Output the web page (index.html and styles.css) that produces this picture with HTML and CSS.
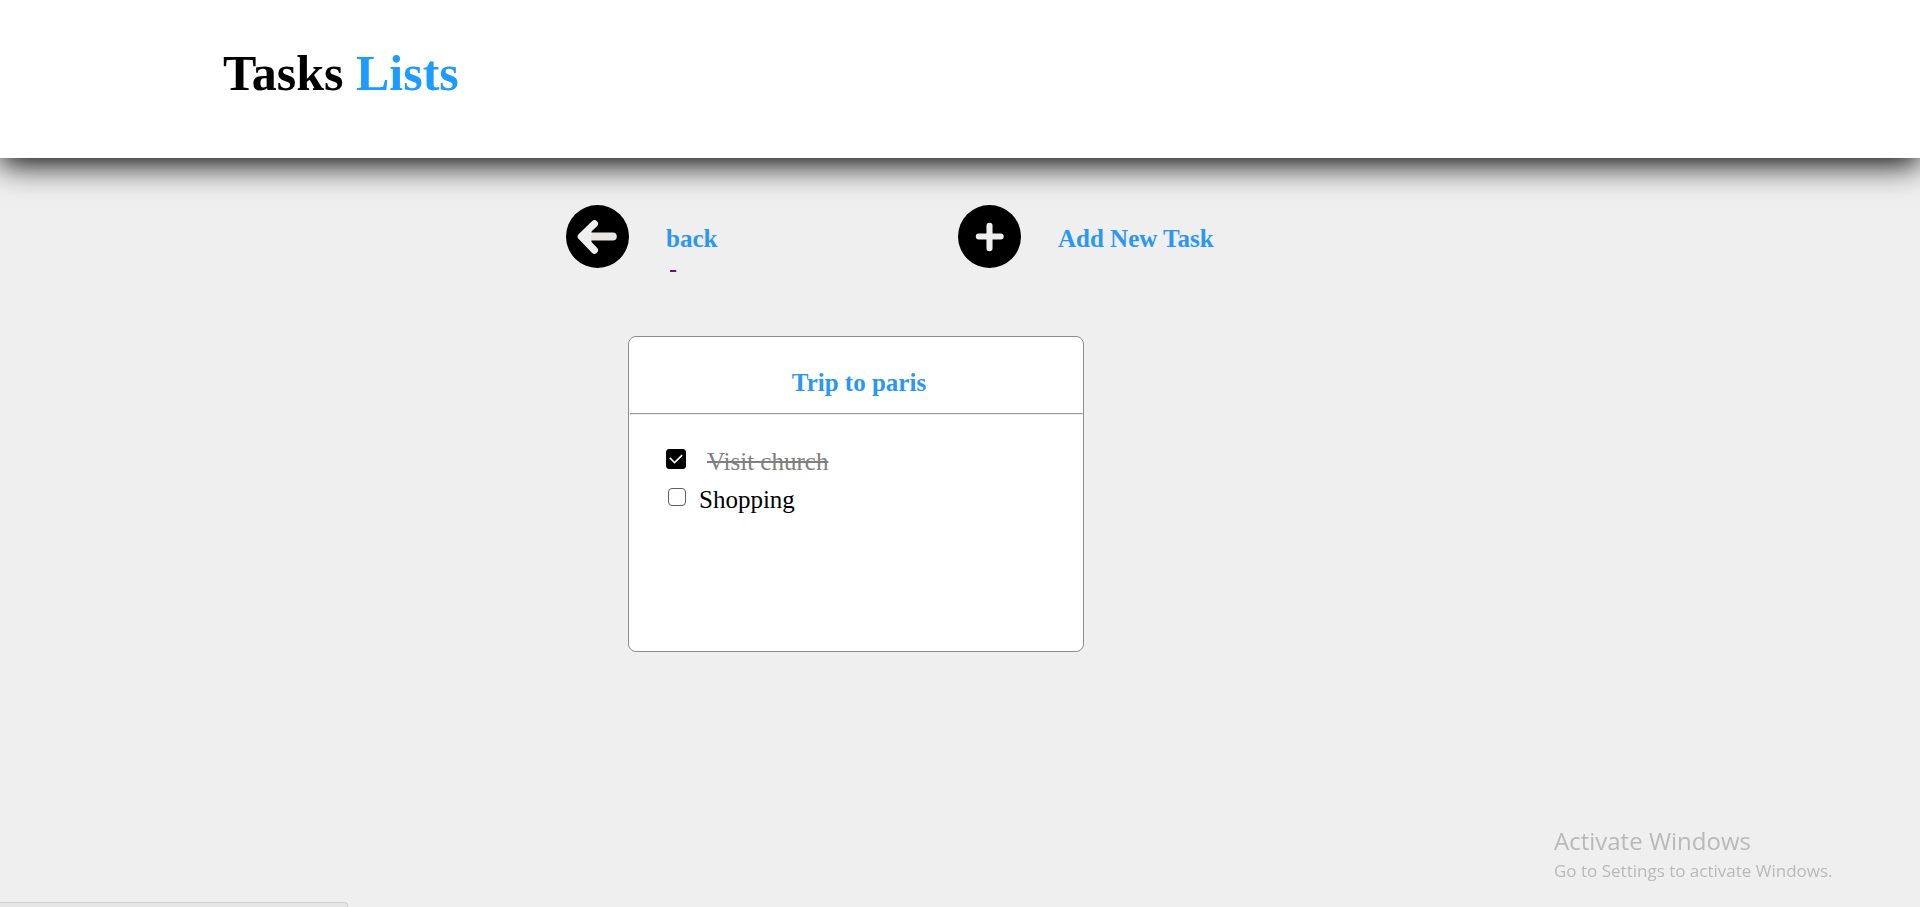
FILE: index.html
```html
<!DOCTYPE html>
<html lang="en">
<head>
<meta charset="utf-8">
<title>Tasks Lists</title>
<link rel="stylesheet" href="styles.css">
</head>
<body>
<header class="header">
  <h1 class="title">Tasks <span class="accent">Lists</span></h1>
</header>
<main class="main">
  <nav class="actions">
    <a class="action" href="#back">
      <svg class="action-icon" viewBox="0 0 62 62" aria-hidden="true">
        <circle cx="31" cy="31" r="31" fill="#000"/>
        <path d="M46 31H20" stroke="#e9e5e5" stroke-width="8" stroke-linecap="round"/>
        <path d="M28 18.500L15 31l13 13.500" fill="none" stroke="#efefef" stroke-width="7" stroke-linecap="round" stroke-linejoin="round"/>
        <path d="M15 31l10-9v18z" fill="#efefef"/>
      </svg>
      <span class="action-text">back<span class="action-tail">&nbsp;</span></span>
    </a>
    <a class="action" href="#new">
      <svg class="action-icon" viewBox="0 0 62 62" aria-hidden="true">
        <circle cx="31" cy="31" r="31" fill="#000"/>
        <path d="M20.500 31h21.500M31 20.500v22" stroke="#efefef" stroke-width="6" stroke-linecap="round"/>
      </svg>
      <span class="action-text">Add New Task</span>
    </a>
  </nav>
  <section class="card">
    <h2 class="card-title">Trip to paris</h2>
    <hr class="rule">
    <ul class="tasks">
      <li><label class="task done"><input class="check" type="checkbox" checked><s>Visit church</s></label></li>
      <li><label class="task"><input class="check" type="checkbox"><span>Shopping</span></label></li>
    </ul>
  </section>
</main>
<aside class="notice">
  <p class="notice-title">Activate Windows</p>
  <p class="notice-text">Go to Settings to activate Windows.</p>
</aside>
<div class="status"></div>
</body>
</html>
```
FILE: styles.css
```css
* { box-sizing: border-box; }
body {
  margin: 0;
  min-height: 100vh;
  background: #efefef;
  color: #000;
  font-family: "Liberation Serif", "Times New Roman", serif;
  font-size: 25px;
  line-height: 30px;
}
.header {
  padding: 44px 24px 56px 223px;
  background: #fff;
  box-shadow: 0 6px 30px #000;
}
.title { margin: 0; font-size: 50px; line-height: 58px; }
.accent { color: #1e9bff; }
.main { padding: 47px 24px 0 566px; }
.actions { display: flex; gap: 24px; }
.action {
  display: flex;
  align-items: flex-start;
  gap: 37px;
  min-width: 368px;
  color: #2c96f3;
  font-weight: bold;
  text-decoration: none;
}
.action-icon { width: 63px; height: 63px; }
.action-text { display: flex; flex-direction: column; padding-top: 19px; }
.action-tail {
  align-self: flex-start;
  margin-left: 4px;
  line-height: 14px;
  font-weight: normal;
  color: #551a8b;
  text-decoration: underline;
  text-decoration-thickness: 2px;
}
.card {
  width: 100%;
  max-width: 456px;
  min-height: 316px;
  margin: 68px 0 0 62px;
  background: #fff;
  border: 1px solid #8c8c8c;
  border-radius: 8px;
}
.card-title {
  margin: 0;
  padding: 31px 0 15px 6px;
  font-size: 25px;
  line-height: 30px;
  text-align: center;
  color: #2c96f3;
}
.rule { margin: 0 0 0 1px; border: 1px inset #eee; }
.tasks { margin: 0; padding: 28px 36px; list-style: none; }
.task { display: flex; align-items: center; gap: 13px; height: 38px; padding-left: 3px; }
.done { gap: 21px; padding-left: 1px; color: #808080; }
.check {
  appearance: none;
  flex: none;
  width: 18px;
  height: 18px;
  margin: 0 0 6px;
  border: 1px solid #606060;
  border-radius: 4px;
  background: #fff;
}
.check:checked {
  display: grid;
  place-items: center;
  width: 20px;
  height: 20px;
  margin-bottom: 7px;
  border-color: #000;
  border-radius: 3px;
  background: #000;
}
.check:checked::before {
  content: "";
  width: 10px;
  height: 6px;
  margin-bottom: 3px;
  border: solid #fff;
  border-width: 0 0 2px 2px;
  border-radius: 1px;
  transform: rotate(-45deg);
}
.notice {
  position: fixed;
  right: 82px;
  bottom: 22px;
  width: 284px;
  color: #b9b9b9;
  font-family: "Open Sans", "Noto Sans", sans-serif;
}
.notice p { margin: 0; }
.notice-title { font-size: 24px; line-height: 32px; }
.notice-text { font-size: 17px; line-height: 28px; }
.status {
  position: fixed;
  left: 0;
  bottom: 0;
  width: 348px;
  height: 5px;
  background: #e6e6e6;
  border: solid #d0d0d0;
  border-width: 1px 1px 0 0;
  border-top-right-radius: 4px;
}
```
